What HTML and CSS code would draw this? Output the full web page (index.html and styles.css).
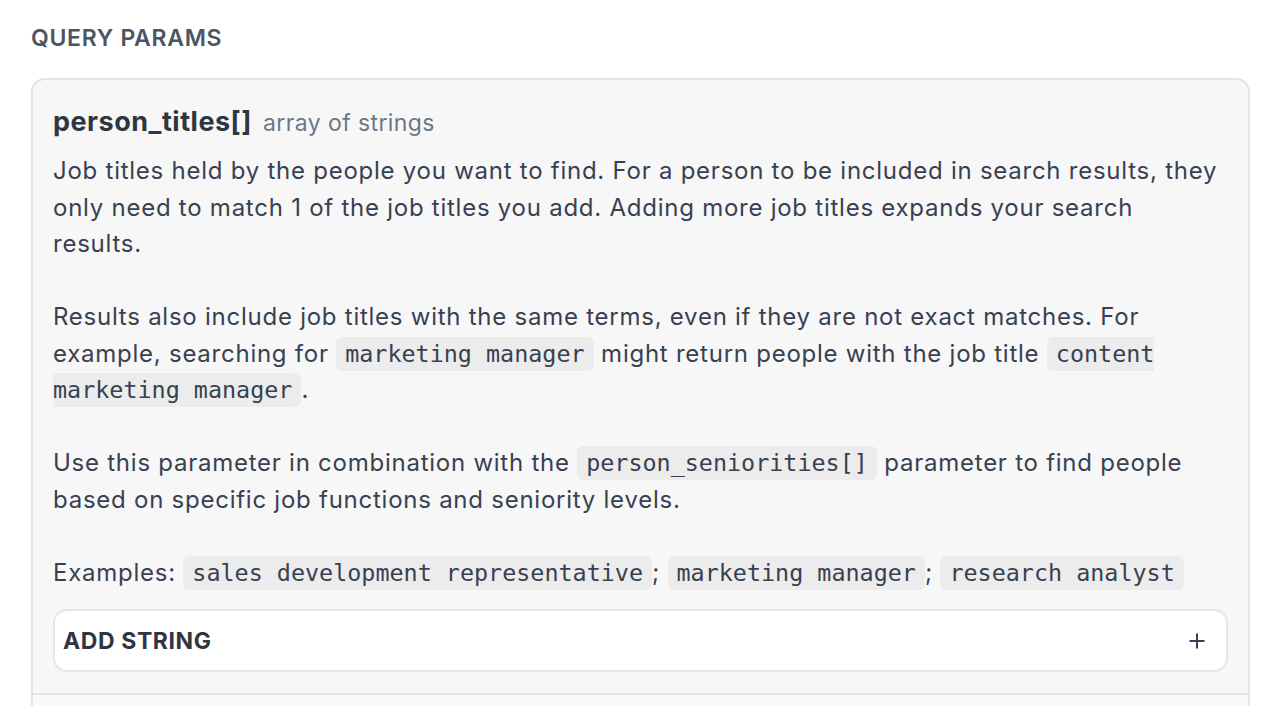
FILE: index.html
```html
<!DOCTYPE html>
<html lang="en">
<head>
<meta charset="utf-8">
<title>Query Params</title>
<link rel="stylesheet" href="styles.css">
</head>
<body>
<main class="page">
  <h2 class="section-title">QUERY PARAMS</h2>
  <div class="card">
    <div class="param">
      <div class="param-head">
        <span class="param-name">person_titles[]</span>
        <span class="param-type">array of strings</span>
      </div>
      <div class="param-desc">
        <p>Job titles held by the people you want to find. For a person to be included in search results, they only need to match 1 of the job titles you add. Adding more job titles expands your search results.</p>
        <p>Results also include job titles with the same terms, even if they are not exact matches. For example, searching for <code>marketing manager</code> might return people with the job title <code>content marketing manager</code>.</p>
        <p>Use this parameter in combination with the <code>person_seniorities[]</code> parameter to find people based on specific job functions and seniority levels.</p>
        <p>Examples: <code>sales development representative</code>; <code>marketing manager</code>; <code>research analyst</code></p>
      </div>
      <button class="add-btn" type="button">
        <span class="add-label">ADD STRING</span>
        <svg class="plus" width="18" height="18" viewBox="0 0 18 18" aria-hidden="true"><path d="M9 1.5v15M1.5 9h15" stroke="#374151" stroke-width="2" fill="none"/></svg>
      </button>
    </div>
    <div class="param next"></div>
  </div>
</main>
</body>
</html>
```
FILE: styles.css
```css
html, body {
  margin: 0;
  padding: 0;
  background: #ffffff;
}
body {
  font-family: "Inter", "Liberation Sans", sans-serif;
  color: #374151;
  overflow: hidden;
}
.page {
  padding: 25px 20px 0 31px;
}
.section-title {
  margin: 0 0 27px;
  font-size: 23px;
  line-height: 26px;
  font-weight: 600;
  color: #4b5563;
  letter-spacing: 0.7px;
}
.card {
  background: #f7f7f7;
  border: 2px solid #e4e4e4;
  border-radius: 14px;
  overflow: hidden;
}
.param {
  padding: 22px 20px 21px 20px;
}
.param-head {
  display: flex;
  align-items: baseline;
  gap: 11px;
  line-height: 40px;
}
.param-name {
  font-size: 27px;
  font-weight: 700;
  color: #30363f;
  letter-spacing: 0.5px;
}
.param-type {
  font-size: 23px;
  color: #6b7789;
  letter-spacing: 0.4px;
}
.param-desc {
  margin-top: 10px;
  font-size: 24px;
  line-height: 36.5px;
  color: #374151;
  letter-spacing: 0.75px;
}
.param-desc p {
  margin: 0 0 36.5px;
}
.param-desc p:last-child {
  margin-bottom: 0;
}
code {
  font-family: "DejaVu Sans Mono", monospace;
  font-size: 23.4px;
  letter-spacing: 0;
  background: #ececec;
  border-radius: 6px;
  padding: 3px 9px;
  color: #374151;
}
.add-btn {
  box-sizing: border-box;
  margin-top: 18px;
  width: 100%;
  height: 63px;
  display: flex;
  align-items: center;
  justify-content: space-between;
  padding: 0 20px 0 8px;
  background: #ffffff;
  border: 2px solid #e6e6e6;
  border-radius: 14px;
  font-family: inherit;
  cursor: pointer;
}
.add-label {
  font-size: 23px;
  font-weight: 700;
  color: #30363f;
  letter-spacing: 0.6px;
}
.param.next {
  border-top: 2px solid #e4e4e4;
  background: #f9f9f9;
  height: 60px;
  padding: 0;
}
```
